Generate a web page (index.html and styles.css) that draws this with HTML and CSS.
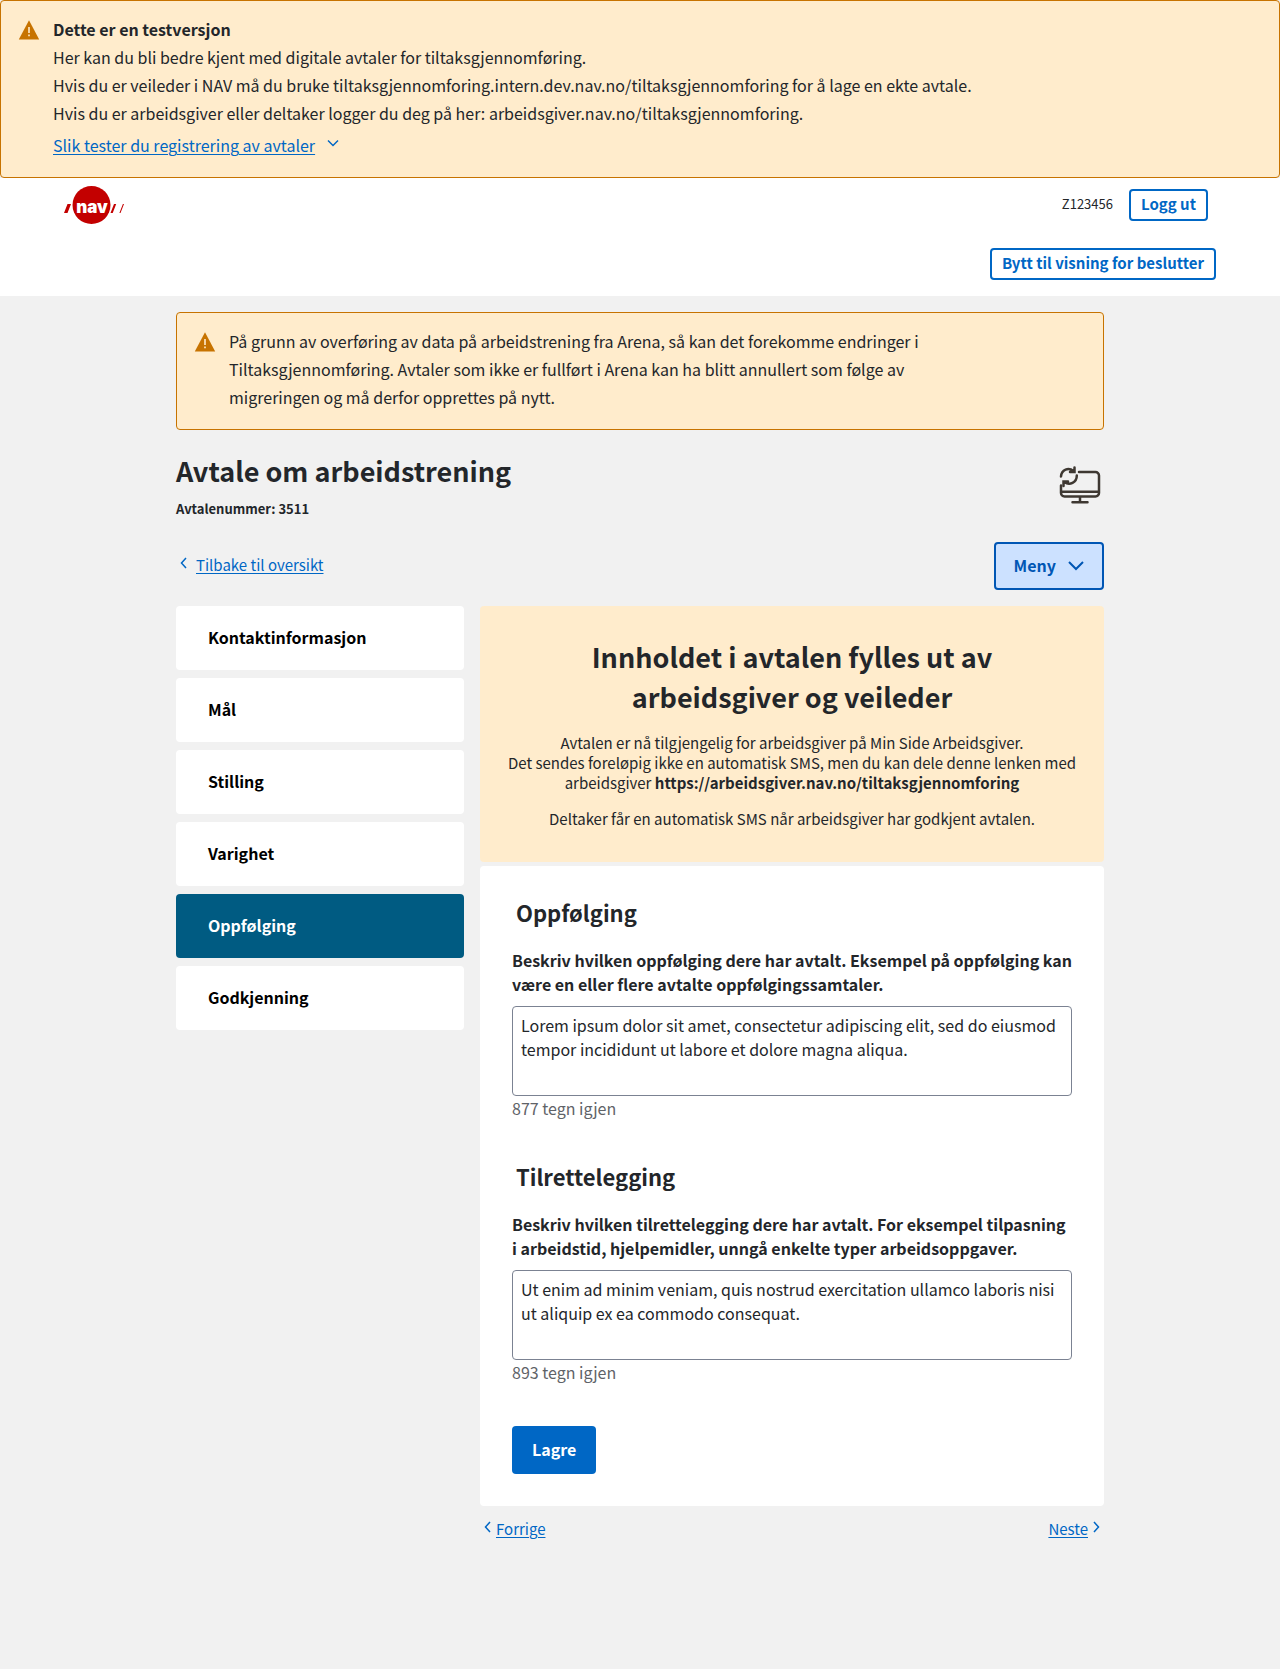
FILE: index.html
```html
<!DOCTYPE html>
<html lang="nb">
<head>
  <meta charset="utf-8">
  <meta name="viewport" content="width=device-width, initial-scale=1">
  <title>Avtale om arbeidstrening</title>
  <link rel="stylesheet" href="styles.css">
</head>
<body>
  <aside class="alert">
    <svg class="alert-icon" viewBox="0 0 24 24" aria-hidden="true"><path fill="#c77300" d="M12 2.3 22.200 21.500H1.800z"/><path fill="#ffeccc" d="M11.2 9h1.6v6h-1.6zM11.2 16.5h1.6v1.7h-1.6z"/></svg>
    <div>
      <p class="strong">Dette er en testversjon</p>
      <p>Her kan du bli bedre kjent med digitale avtaler for tiltaksgjennomføring.</p>
      <p>Hvis du er veileder i NAV må du bruke tiltaksgjennomforing.intern.dev.nav.no/tiltaksgjennomforing for å lage en ekte avtale.</p>
      <p>Hvis du er arbeidsgiver eller deltaker logger du deg på her: arbeidsgiver.nav.no/tiltaksgjennomforing.</p>
      <a class="guide-link" href="#guide"><span class="link-text">Slik tester du registrering av avtaler</span><svg class="chevron" viewBox="0 0 12 12" aria-hidden="true"><path d="M1 3.500 6 8.500 11 3.500"/></svg></a>
    </div>
  </aside>

  <header class="header">
    <div class="header-row">
      <a href="#home" aria-label="nav"><svg class="logo" viewBox="0 0 60 40" aria-hidden="true">
        <g fill="#c30000"><circle cx="27.500" cy="20" r="19"/><path d="M3.500 19H7L3.500 28H0zM50 19H52.200L48.700 28H46.500zM58.900 19H60L56.500 28H55.400z"/></g>
        <text class="logo-text" x="28" y="28" text-anchor="middle">nav</text>
      </svg></a>
      <div class="user">
        <span class="user-id">Z123456</span>
        <button class="btn-small" type="button">Logg ut</button>
      </div>
    </div>
    <div class="switch-row">
      <button class="btn-small" type="button">Bytt til visning for beslutter</button>
    </div>
  </header>

  <main class="main">
    <aside class="alert">
      <svg class="alert-icon" viewBox="0 0 24 24" aria-hidden="true"><path fill="#c77300" d="M12 2.3 22.200 21.500H1.800z"/><path fill="#ffeccc" d="M11.2 9h1.6v6h-1.6zM11.2 16.5h1.6v1.7h-1.6z"/></svg>
      <p class="alert-text">På grunn av overføring av data på arbeidstrening fra Arena, så kan det forekomme endringer i Tiltaksgjennomføring. Avtaler som ikke er fullført i Arena kan ha blitt annullert som følge av migreringen og må derfor opprettes på nytt.</p>
    </aside>

    <div class="title-row">
      <div>
        <h1 class="title">Avtale om arbeidstrening</h1>
        <p class="agreement-number">Avtalenummer: 3511</p>
      </div>
      <svg class="title-icon" viewBox="0 0 48 48" aria-hidden="true">
        <path d="M23 11H39.500a3.500 3.500 0 0 1 3.500 3.500V32a3.500 3.500 0 0 1-3.500 3.500H8.500a3.500 3.500 0 0 1-3.500-3.500V24.500M5 30.800H43M24 35.500V41M16.500 41.200H31.500"/>
        <path d="M5 15.500C5.500 8.500 12.500 6 17.500 10M18.500 6.500V11H14M20.800 14.500C20.800 21.500 13.500 25 8.500 21M7.500 25V20.600H12"/>
      </svg>
    </div>

    <div class="toolbar">
      <a class="back-link" href="#oversikt"><svg class="chevron" viewBox="0 0 12 12" aria-hidden="true"><path d="M8 1 3.500 6 8 11"/></svg><span class="link-text">Tilbake til oversikt</span></a>
      <button class="btn-menu" type="button">Meny<svg class="menu-chevron" viewBox="0 0 24 24" aria-hidden="true"><path d="M5 9l7 7 7-7"/></svg></button>
    </div>

    <div class="columns">
      <nav class="steps" aria-label="Steg">
        <a class="step" href="#kontaktinformasjon">Kontaktinformasjon</a>
        <a class="step" href="#maal">Mål</a>
        <a class="step" href="#stilling">Stilling</a>
        <a class="step" href="#varighet">Varighet</a>
        <a class="step step-active" href="#oppfolging" aria-current="step">Oppfølging</a>
        <a class="step" href="#godkjenning">Godkjenning</a>
      </nav>

      <div class="content">
        <section class="status">
          <h2 class="title">Innholdet i avtalen fylles ut av<br>arbeidsgiver og veileder</h2>
          <p>Avtalen er nå tilgjengelig for arbeidsgiver på Min Side Arbeidsgiver.<br>Det sendes foreløpig ikke en automatisk SMS, men du kan dele denne lenken med arbeidsgiver <b>https://arbeidsgiver.nav.no/tiltaksgjennomforing</b></p>
          <p>Deltaker får en automatisk SMS når arbeidsgiver har godkjent avtalen.</p>
        </section>

        <form class="card">
          <section class="field">
            <h3 class="field-title">Oppfølging</h3>
            <label class="label" for="oppfolging">Beskriv hvilken oppfølging dere har avtalt. Eksempel på oppfølging kan være en eller flere avtalte oppfølgingssamtaler.</label>
            <textarea class="textarea" id="oppfolging" rows="3">Lorem ipsum dolor sit amet, consectetur adipiscing elit, sed do eiusmod tempor incididunt ut labore et dolore magna aliqua.</textarea>
            <p class="counter">877 tegn igjen</p>
          </section>
          <section class="field">
            <h3 class="field-title">Tilrettelegging</h3>
            <label class="label" for="tilrettelegging">Beskriv hvilken tilrettelegging dere har avtalt. For eksempel tilpasning i arbeidstid, hjelpemidler, unngå enkelte typer arbeidsoppgaver.</label>
            <textarea class="textarea" id="tilrettelegging" rows="3">Ut enim ad minim veniam, quis nostrud exercitation ullamco laboris nisi ut aliquip ex ea commodo consequat.</textarea>
            <p class="counter">893 tegn igjen</p>
          </section>
          <button class="btn-primary" type="submit">Lagre</button>
        </form>

        <nav class="pager" aria-label="Forrige og neste steg">
          <a class="pager-link" href="#varighet"><svg class="chevron" viewBox="0 0 12 12" aria-hidden="true"><path d="M8 1 3.500 6 8 11"/></svg><span class="link-text">Forrige</span></a>
          <a class="pager-link" href="#godkjenning"><span class="link-text">Neste</span><svg class="chevron" viewBox="0 0 12 12" aria-hidden="true"><path d="M4 1 8.500 6 4 11"/></svg></a>
        </nav>
      </div>
    </div>
  </main>
</body>
</html>
```
FILE: styles.css
```css
* {
  box-sizing: border-box;
}

body {
  margin: 0;
  min-height: 100vh;
  background: #f1f1f1;
  color: #23262a;
  font-family: "Noto Sans CJK SC", "Noto Sans", sans-serif;
  font-size: 16px;
  line-height: 28px;
}

h1, h2, h3, p {
  margin: 0;
}

button, textarea {
  font-family: inherit;
  color: inherit;
}

a {
  color: #0067c5;
  text-decoration: none;
}

.link-text {
  text-decoration: underline;
  text-decoration-thickness: 1px;
  text-underline-offset: 2px;
}

.chevron {
  width: 12px;
  height: 12px;
  flex: none;
  margin-bottom: 4px;
  fill: none;
  stroke: #0067c5;
  stroke-width: 1.5;
}

.alert {
  display: flex;
  gap: 12px;
  padding: 14px 16px 18px;
  border: 1px solid #c77300;
  border-radius: 4px;
  background: #ffeccc;
}

.alert-icon {
  width: 24px;
  height: 24px;
  flex: none;
  margin-top: 3px;
}

.alert-text {
  max-width: 704px;
}

.strong {
  font-weight: 600;
}

.guide-link {
  display: inline-flex;
  align-items: center;
  gap: 12px;
  margin: 4px 0 -1px;
}

.header {
  padding: 7px 64px 16px;
  background: #fff;
}

.header-row {
  display: flex;
  align-items: center;
  justify-content: space-between;
  padding-right: 8px;
}

.logo {
  display: block;
  width: 60px;
  height: 40px;
}

.logo-text {
  fill: #fff;
  font: 900 17px Inter, sans-serif;
}

.user {
  display: flex;
  align-items: center;
  gap: 16px;
}

.user-id {
  padding-bottom: 2px;
  font-size: 13px;
}

.switch-row {
  display: flex;
  justify-content: flex-end;
  padding-top: 23px;
}

.btn-small {
  height: 32px;
  padding: 0 10px 2px;
  border: 2px solid #0067c5;
  border-radius: 4px;
  background: #fff;
  color: #0067c5;
  font-size: 15px;
  font-weight: 600;
  line-height: 20px;
}

.main {
  max-width: 960px;
  margin: 0 auto;
  padding: 16px 16px 96px;
}

.title-row {
  display: flex;
  align-items: center;
  justify-content: space-between;
  margin-top: 21px;
}

.title {
  font-size: 27px;
  font-weight: 600;
  line-height: 40px;
}

.agreement-number {
  margin-top: 8px;
  font-size: 13px;
  font-weight: 600;
  line-height: 20px;
}

.title-icon {
  width: 48px;
  height: 48px;
  fill: none;
  stroke: #3e3832;
  stroke-width: 2.5;
  stroke-linecap: round;
}

.toolbar {
  display: flex;
  align-items: center;
  justify-content: space-between;
  margin: 23px 0 16px;
}

.back-link,
.pager-link {
  display: flex;
  align-items: center;
  gap: 6px;
  font-size: 15px;
}

.back-link {
  padding: 0 0 3px 2px;
}

.btn-menu {
  display: flex;
  align-items: center;
  gap: 8px;
  height: 48px;
  padding: 0 14px 2px 18px;
  border: 2px solid #0056b4;
  border-radius: 4px;
  background: #cce1ff;
  color: #0056b4;
  font-size: 16px;
  font-weight: 600;
}

.menu-chevron {
  width: 24px;
  height: 24px;
  fill: none;
  stroke: #0056b4;
  stroke-width: 2;
}

.columns {
  display: grid;
  grid-template-columns: 288px 1fr;
  align-items: start;
  gap: 16px;
}

.steps {
  display: grid;
  gap: 8px;
}

.step {
  padding: 17px 32px 19px;
  border-radius: 4px;
  background: #fff;
  color: #000;
  font-weight: 600;
}

.step-active {
  background: #005b82;
  color: #fff;
}

.status {
  display: grid;
  gap: 16px;
  padding: 31px 24px 33px;
  border-radius: 4px;
  background: #ffeccc;
  font-size: 15px;
  line-height: 20px;
  text-align: center;
}

.status b {
  font-weight: 600;
}

.card {
  margin-top: 4px;
  padding: 30px 32px 32px;
  border-radius: 4px;
  background: #fff;
  line-height: 24px;
}

.field {
  margin-bottom: 40px;
}

.field-title {
  margin-bottom: 20px;
  padding-left: 4px;
  font-size: 22px;
  font-weight: 600;
  line-height: 32px;
}

.label {
  display: block;
  margin-bottom: 10px;
  font-weight: 600;
}

.textarea {
  display: block;
  width: 100%;
  height: 90px;
  padding: 6px 8px;
  border: 1px solid #7b8292;
  border-radius: 4px;
  background: #fff;
  font-size: 16px;
  line-height: 24px;
  resize: none;
}

.counter {
  color: #5f6368;
}

.btn-primary {
  height: 48px;
  margin-top: 2px;
  padding: 0 20px 2px;
  border: 0;
  border-radius: 4px;
  background: #0067c5;
  color: #fff;
  font-size: 16px;
  font-weight: 600;
}

.pager {
  display: flex;
  justify-content: space-between;
  padding: 9px 2px;
}

.pager-link {
  gap: 2px;
}
```
